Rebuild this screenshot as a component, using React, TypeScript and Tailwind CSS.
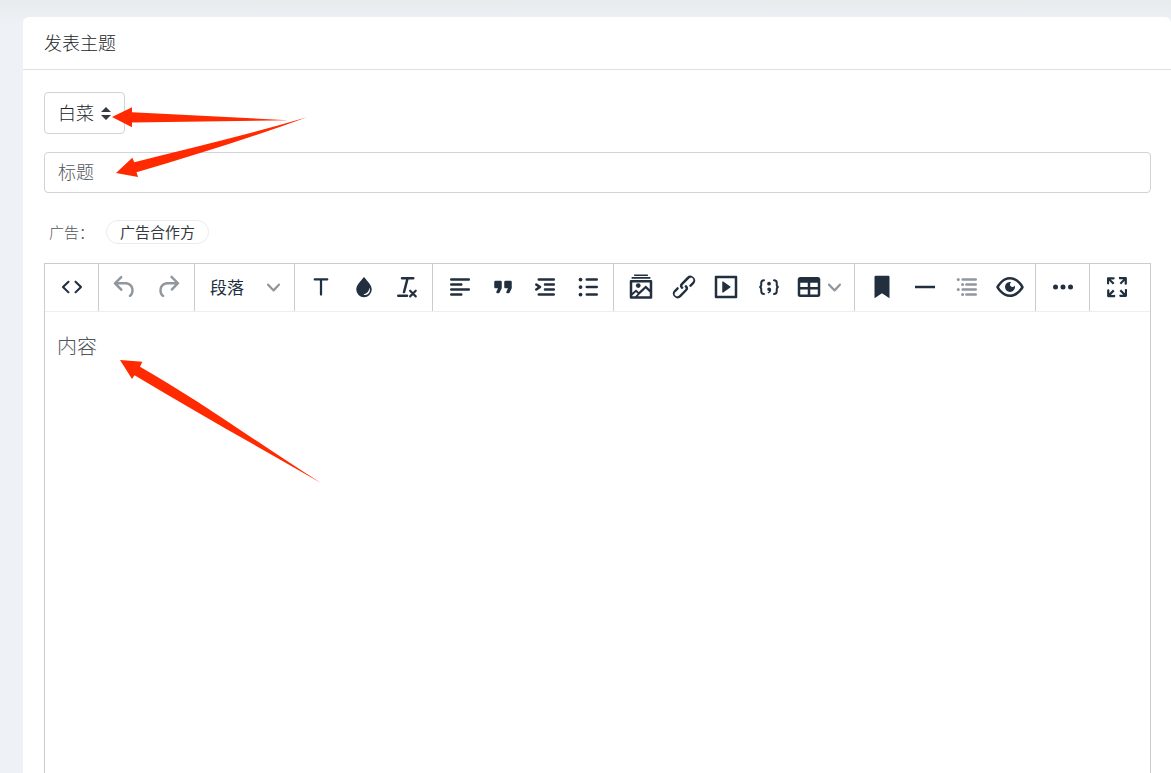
import { useState } from "react";
import type { ReactNode } from "react";

interface ToolButtonProps {
  label: string;
  disabled?: boolean;
  children: ReactNode;
}

function Icon({ children }: { children: ReactNode }) {
  return (
    <svg viewBox="0 0 24 24" className="size-[30px] shrink-0" fill="currentColor" aria-hidden="true">
      {children}
    </svg>
  );
}

function Chevron() {
  return (
    <svg viewBox="0 0 10 10" className="size-[13px] shrink-0 text-[#8f969e]" fill="currentColor" aria-hidden="true">
      <path d="M8.7 2.2c.3-.3.8-.3 1 0 .4.4.4.9 0 1.2L5.7 7.8c-.3.3-.9.3-1.2 0L.2 3.4a.8.8 0 0 1 0-1.2c.3-.3.8-.3 1.1 0L5 6l3.7-3.8Z" />
    </svg>
  );
}

function ToolButton({ label, disabled, children }: ToolButtonProps) {
  return (
    <button
      type="button"
      aria-label={label}
      disabled={disabled}
      className="flex h-[42px] flex-1 items-center justify-center rounded-[3px] hover:bg-[#c8cbcf] disabled:text-[#90979e] disabled:hover:bg-transparent"
    >
      <Icon>{children}</Icon>
    </button>
  );
}

function Toolbar() {
  return (
    <div role="toolbar" className="flex h-12 border-b border-[#eeeeee] text-[#222f3e]">
      <div className="flex w-[54px] items-start border-r border-[#cccccc] px-[5px] pt-0.5">
        <ToolButton label="源代码">
          <path d="M9.8 15.7c.3.3.3.8 0 1-.3.4-.9.4-1.2 0l-4.4-4.1a.8.8 0 0 1 0-1.2l4.4-4.2c.3-.3.9-.3 1.2 0 .3.3.3.8 0 1.1L6 12l3.8 3.7zM14.2 15.7c-.3.3-.3.8 0 1 .4.4.9.4 1.2 0l4.4-4.1c.3-.3.3-.9 0-1.2l-4.4-4.2a.8.8 0 0 0-1.2 0c-.3.3-.3.8 0 1.1L18 12l-3.8 3.7z" />
        </ToolButton>
      </div>

      <div className="flex w-24 items-start border-r border-[#cccccc] px-[5px] pt-0.5">
        <ToolButton label="撤销" disabled>
          <path d="M6.4 8H12c3.7 0 6.2 2 6.8 5.1.6 2.7-.4 5.6-2.3 6.8a1 1 0 0 1-1-1.8c1.1-.6 1.8-2.7 1.4-4.6-.5-2.1-2.1-3.5-4.9-3.5H6.4l3.3 3.3a1 1 0 1 1-1.4 1.4l-5-5a1 1 0 0 1 0-1.4l5-5a1 1 0 0 1 1.4 1.4L6.4 8z" />
        </ToolButton>
        <ToolButton label="重做" disabled>
          <path d="M17.6 10H12c-2.8 0-4.4 1.4-4.9 3.5-.4 2 .3 4 1.4 4.6a1 1 0 1 1-1 1.8c-2-1.2-2.9-4.1-2.3-6.8.6-3 3-5.1 6.8-5.1h5.6l-3.3-3.3a1 1 0 1 1 1.4-1.4l5 5a1 1 0 0 1 0 1.4l-5 5a1 1 0 0 1-1.4-1.4l3.3-3.3z" />
        </ToolButton>
      </div>

      <div className="flex w-[100px] items-start border-r border-[#cccccc] px-[5px] pt-0.5">
        <button type="button" className="flex h-[42px] flex-1 items-center justify-between pr-[9px] pl-[10px] text-[17px]">
          段落
          <Chevron />
        </button>
      </div>

      <div className="flex w-[138px] items-start border-r border-[#cccccc] pt-0.5 pr-1 pl-[5px]">
        <ToolButton label="文字颜色">
          <path d="M7 5h10a.9.9 0 0 1 0 1.8h-4.1V18a.9.9 0 0 1-1.8 0V6.8H7A.9.9 0 0 1 7 5z" />
        </ToolButton>
        <ToolButton label="背景颜色">
          <path
            fillRule="evenodd"
            d="M12 4c2.8 3.4 6.200 6.600 6.200 10a6.200 6.200 0 0 1-12.400 0C5.800 10.600 9.200 7.400 12 4zM16.300 12.300c-.1 3-1.700 5-4.700 5.500.3.500.8.700 1.400.6 2.900-.5 4.600-3.100 3.300-6.100z"
          />
        </ToolButton>
        <ToolButton label="清除格式">
          <path d="M13.2 6a1 1 0 0 1 0 .2l-2.6 10a1 1 0 0 1-1 .8h-.2a.8.8 0 0 1-.8-1l2.6-10H8a1 1 0 1 1 0-2h9a1 1 0 0 1 0 2h-3.800zM5 18h7a1 1 0 0 1 0 2H5a1 1 0 0 1 0-2z" />
          <path d="M14.500 15l4.500 4.500M19 15l-4.500 4.500" stroke="currentColor" strokeWidth="1.700" strokeLinecap="round" />
        </ToolButton>
      </div>

      <div className="flex w-[181px] items-start border-r border-[#cccccc] pt-0.5 pr-1 pl-1.5">
        <ToolButton label="左对齐">
          <path d="M5 5h14c.6 0 1 .4 1 1s-.4 1-1 1H5a1 1 0 1 1 0-2zm0 4h8c.6 0 1 .4 1 1s-.4 1-1 1H5a1 1 0 1 1 0-2zm0 8h8c.6 0 1 .4 1 1s-.4 1-1 1H5a1 1 0 0 1 0-2zm0-4h14c.6 0 1 .4 1 1s-.4 1-1 1H5a1 1 0 0 1 0-2z" />
        </ToolButton>
        <ToolButton label="引用">
          <path d="M7.5 17h.9c.4 0 .7-.2.9-.6L11 13V8c0-.6-.4-1-1-1H6a1 1 0 0 0-1 1v4c0 .6.4 1 1 1h2l-1.3 2.7a1 1 0 0 0 .8 1.3zm8 0h.9c.4 0 .7-.2.9-.6L19 13V8c0-.6-.4-1-1-1h-4a1 1 0 0 0-1 1v4c0 .6.4 1 1 1h2l-1.3 2.7a1 1 0 0 0 .8 1.3z" />
        </ToolButton>
        <ToolButton label="增加缩进">
          <path d="M7 5h12c.6 0 1 .4 1 1s-.4 1-1 1H7a1 1 0 1 1 0-2zm5 4h7c.6 0 1 .4 1 1s-.4 1-1 1h-7a1 1 0 0 1 0-2zm0 4h7c.6 0 1 .4 1 1s-.4 1-1 1h-7a1 1 0 0 1 0-2zm-5 4h12a1 1 0 0 1 0 2H7a1 1 0 0 1 0-2zm-2.600-3.800L6.200 12l-1.800-1.200a1 1 0 0 1 1.200-1.600l3 2a1 1 0 0 1 0 1.600l-3 2a1 1 0 1 1-1.200-1.600z" />
        </ToolButton>
        <ToolButton label="项目列表">
          <path d="M11 5h8a1 1 0 0 1 0 2h-8a1 1 0 0 1 0-2zm0 6h8a1 1 0 0 1 0 2h-8a1 1 0 0 1 0-2zm0 6h8a1 1 0 0 1 0 2h-8a1 1 0 0 1 0-2z" />
          <circle cx="6" cy="6" r="1.500" />
          <circle cx="6" cy="12" r="1.500" />
          <circle cx="6" cy="18" r="1.500" />
        </ToolButton>
      </div>

      <div className="flex w-[241px] items-start border-r border-[#cccccc] pt-0.5 pr-1 pl-1.5">
        <ToolButton label="图片">
          <path d="M6.500 2h11v1.200h-11zM4.500 4h15v1.300h-15z" />
          <path
            fillRule="evenodd"
            d="M4 6.300h16a1 1 0 0 1 1 1v13a1 1 0 0 1-1 1H4a1 1 0 0 1-1-1v-13a1 1 0 0 1 1-1zM5 8.300v8.200l3-2.500 2.200 2 5.600-5.200 3.200 3V8.300zM5 18.700v.6h2.400l2-1.900L8 16zM9.300 19.300H19v-3l-3.200-3.200z"
          />
          <circle cx="9.800" cy="10.800" r="1.900" />
        </ToolButton>
        <ToolButton label="链接">
          <path d="M6.2 12.3a1 1 0 0 1 1.4 1.4l-2 2a2 2 0 1 0 2.6 2.8l4.8-4.8a1 1 0 0 0 0-1.4 1 1 0 1 1 1.4-1.3 2.9 2.9 0 0 1 0 4L9.6 20a3.9 3.9 0 0 1-5.5-5.5l2-2zm11.6-.6a1 1 0 0 1-1.4-1.4l2-2a2 2 0 1 0-2.6-2.8L11 10.3a1 1 0 0 0 0 1.4A1 1 0 1 1 9.6 13a2.9 2.9 0 0 1 0-4L14.4 4a3.9 3.9 0 0 1 5.5 5.5l-2 2z" />
        </ToolButton>
        <ToolButton label="媒体">
          <path
            fillRule="evenodd"
            d="M4 3h16c.6 0 1 .4 1 1v16c0 .6-.4 1-1 1H4a1 1 0 0 1-1-1V4c0-.6.4-1 1-1zm1 2v14h14V5H5zm4.800 2.600 5.600 4a.5.5 0 0 1 0 .8l-5.600 4A.5.5 0 0 1 9 16V8a.5.5 0 0 1 .8-.4z"
          />
        </ToolButton>
        <ToolButton label="代码示例">
          <path
            d="M8 6.500c-1.500 0-2.200.8-2.200 2.100v1.600c0 1-.5 1.700-1.500 1.800 1 .1 1.500.8 1.500 1.800v1.600c0 1.300.7 2.100 2.200 2.100M16 6.500c1.500 0 2.200.8 2.200 2.100v1.600c0 1 .5 1.700 1.500 1.800-1 .1-1.500.8-1.500 1.800v1.600c0 1.300-.7 2.100-2.200 2.100"
            fill="none"
            stroke="currentColor"
            strokeWidth="1.600"
            strokeLinecap="round"
          />
          <circle cx="12" cy="9.300" r="1.500" />
          <path d="M12.100 12.300c1 0 1.600.8 1.600 1.800 0 1.600-1 2.700-2.500 3l-.3-.8c.7-.2 1.100-.6 1.200-1.100-.9 0-1.500-.6-1.500-1.400 0-.9.700-1.500 1.500-1.500z" />
        </ToolButton>
        <button
          type="button"
          aria-label="表格"
          className="flex h-[42px] w-[60px] items-center gap-1 rounded-[3px] pl-1 hover:bg-[#c8cbcf]"
        >
          <Icon>
            <path
              fillRule="evenodd"
              d="M19 4a2 2 0 0 1 2 2v12a2 2 0 0 1-2 2H5a2 2 0 0 1-2-2V6c0-1.100.9-2 2-2h14zM5 14v4h6v-4H5zm14 0h-6v4h6v-4zm0-5.500h-6V12h6V8.500zM5 12h6V8.500H5V12z"
            />
          </Icon>
          <Chevron />
        </button>
      </div>

      <div className="flex w-[181px] items-start border-r border-[#cccccc] pt-0.5 pr-1 pl-1.5">
        <ToolButton label="书签">
          <path d="M6 4v17l6-4 6 4V4c0-.6-.4-1-1-1H7a1 1 0 0 0-1 1z" />
        </ToolButton>
        <ToolButton label="分割线">
          <path d="M4 11h16v2H4z" />
        </ToolButton>
        <ToolButton label="目录" disabled>
          <path d="M8.500 5H19a1 1 0 0 1 0 2H8.500a1 1 0 0 1 0-2zm3 4H19a1 1 0 0 1 0 2h-7.500a1 1 0 0 1 0-2zm-3 4H19a1 1 0 0 1 0 2H8.500a1 1 0 0 1 0-2zm3 4H19a1 1 0 0 1 0 2h-7.500a1 1 0 0 1 0-2z" />
          <circle cx="5" cy="6" r="1.200" />
          <circle cx="8.500" cy="10" r="1.200" />
          <circle cx="5" cy="14" r="1.200" />
          <circle cx="8.500" cy="18" r="1.200" />
        </ToolButton>
        <ToolButton label="预览">
          <path
            fillRule="evenodd"
            d="M3.5 12.5c.5.8 1.1 1.6 1.8 2.3 2 2 4.2 3.2 6.7 3.2s4.7-1.2 6.7-3.2a16.2 16.2 0 0 0 2.1-2.8 15.7 15.7 0 0 0-2.1-2.8c-2-2-4.2-3.2-6.7-3.2a9.3 9.3 0 0 0-6.7 3.2A16.2 16.2 0 0 0 3.2 12c0 .2.2.3.3.5zm-2.4-1 .7-1.2L4 7.8C6.2 5.4 8.9 4 12 4c3 0 5.8 1.4 8.1 3.8a18.2 18.2 0 0 1 2.8 3.7v1l-.7 1.2-2.1 2.5c-2.3 2.4-5 3.8-8.1 3.8-3 0-5.8-1.4-8.1-3.8a18.2 18.2 0 0 1-2.8-3.7 1 1 0 0 1 0-1zm12-3.3a2 2 0 1 0 2.700 2.600 4 4 0 1 1-2.600-2.600z"
          />
        </ToolButton>
      </div>

      <div className="flex w-[54px] items-start border-r border-[#cccccc] px-[5px] pt-0.5">
        <ToolButton label="更多">
          <circle cx="6" cy="12" r="2" />
          <circle cx="12" cy="12" r="2" />
          <circle cx="18" cy="12" r="2" />
        </ToolButton>
      </div>

      <div className="flex w-[53px] items-start px-[5px] pt-0.5">
        <ToolButton label="全屏">
          <path d="m15.3 10-1.2-1.3 2.9-3h-2.3a.9.9 0 1 1 0-1.7H19c.5 0 .9.4.9.9v4.4a.9.9 0 1 1-1.8 0V7l-2.9 3zm0 4 3 3v-2.3a.9.9 0 1 1 1.7 0V19c0 .5-.4.9-.9.9h-4.4a.9.9 0 1 1 0-1.8H17l-3-2.9 1.3-1.2zM10 15.4l-2.9 3h2.3a.9.9 0 1 1 0 1.7H5a.9.9 0 0 1-.9-.9v-4.4a.9.9 0 1 1 1.8 0V17l2.9-3 1.2 1.3zM8.7 10 5.7 7v2.3a.9.9 0 0 1-1.7 0V5c0-.5.4-.9.9-.9h4.4a.9.9 0 0 1 0 1.8H7l3 2.9-1.3 1.2z" />
        </ToolButton>
      </div>
    </div>
  );
}

// Red pointers drawn over the form fields
function Pointers() {
  return (
    <svg
      width="330"
      height="490"
      viewBox="0 0 330 490"
      fill="#ff2a00"
      className="pointer-events-none absolute top-0 left-0"
      aria-hidden="true"
    >
      <path d="M112 117 132 107.200V112.300L288 120.200 132 122.500V127.200Z" />
      <path d="M116 173 132.300 157.700 134.300 162.300C190 148 250 134 307 117.200 250 138 195 155 136.500 172.200L138 177Z" />
      <path d="M120 360 142.300 361.800 140 366.800C200 401 258 443 321 483 258 447 198 413 134.500 375.200L132 379Z" />
    </svg>
  );
}

export default function App() {
  const [title, setTitle] = useState("");
  const [content, setContent] = useState("");

  return (
    <div className="relative flex min-h-screen flex-col overflow-hidden bg-[#eef2f7] bg-[linear-gradient(180deg,#e7ebed_0px,#eef2f7_24px)] pt-[17px] pl-[23px] font-['Noto_Sans_CJK_SC',sans-serif]">
      <main className="flex flex-1 flex-col rounded-t-md bg-white">
        <header className="border-b border-[#dee0e3] px-[21px] pt-[11px] pb-[13px]">
          <h1 className="text-[18px] leading-7 font-light text-[#212529]">发表主题</h1>
        </header>

        <form className="flex flex-1 flex-col pt-[22px] pr-5 pl-[21px]">
          <div className="relative w-fit">
            <select
              aria-label="版块"
              className="block h-[42px] w-[81px] appearance-none rounded border border-[#ced4da] bg-white pb-0.5 pl-[13px] text-[18px] font-light text-[#212529] outline-none"
            >
              <option>白菜</option>
            </select>
            <svg
              viewBox="0 0 10 13"
              className="pointer-events-none absolute top-[15px] right-[14px] h-[13px] w-[10px]"
              fill="#343a40"
              aria-hidden="true"
            >
              <path d="M5 0l5 5H0zM5 13l5-5H0z" />
            </svg>
          </div>

          <input
            type="text"
            aria-label="标题"
            value={title}
            onChange={(event) => setTitle(event.target.value)}
            placeholder="标题"
            className="mt-[18px] h-[41px] w-full rounded border border-[#ced4da] px-[13px] pb-[3px] text-[18px] font-light text-[#212529] outline-none placeholder:text-[#50565c]"
          />

          <div className="mt-[27px] flex h-6 items-center gap-3 pl-[5px] text-[15px]">
            <span className="font-light text-[#50565c]">广告：</span>
            <a
              href="#"
              className="flex h-6 items-center rounded-full border border-[#e9ecef] px-[13px] text-[#343a40]"
            >
              广告合作方
            </a>
          </div>

          <div className="mt-[19px] flex flex-1 flex-col border-x border-t border-[#cccccc]">
            <Toolbar />
            <textarea
              aria-label="内容"
              value={content}
              onChange={(event) => setContent(event.target.value)}
              placeholder="内容"
              className="block w-full flex-1 resize-none px-3 pt-5 text-[20px] leading-7 font-light text-[#222f3e] outline-none placeholder:text-[#50565c]"
            />
          </div>
        </form>
      </main>

      <Pointers />
    </div>
  );
}
